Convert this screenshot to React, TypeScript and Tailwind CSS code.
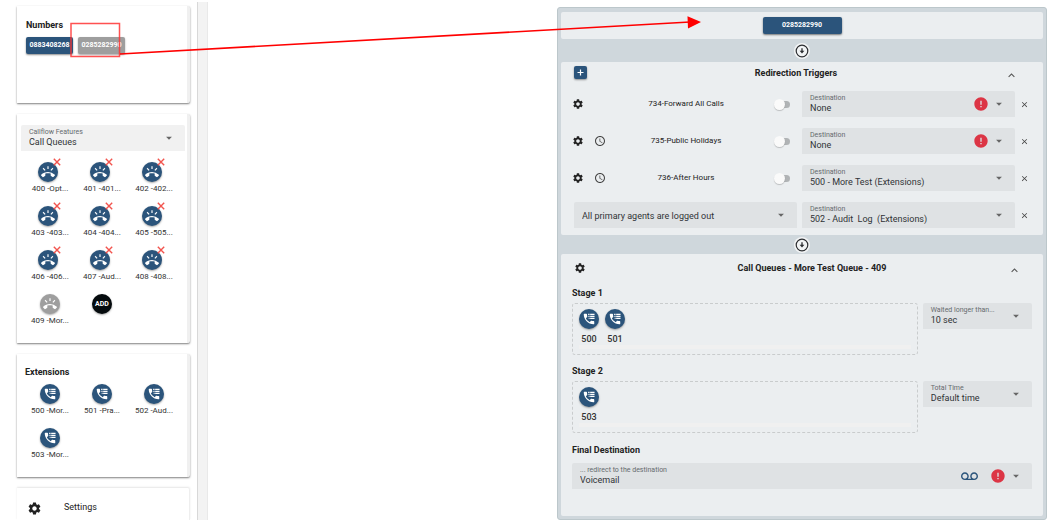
import { useId, type ReactNode } from "react";
import {
  MdAccessTime,
  MdArrowDropDown,
  MdClose,
  MdError,
  MdExpandLess,
  MdRingVolume,
  MdSettings,
  MdVoicemail,
} from "react-icons/md";

const queues = [
  "400 -Opt...",
  "401 -401...",
  "402 -402...",
  "403 -403...",
  "404 -404...",
  "405 -505...",
  "406 -406...",
  "407 -Aud...",
  "408 -408...",
];
const extensions = ["500 -Mor...", "501 -Pra...", "502 -Aud...", "503 -Mor..."];

const triggers = [
  { name: "734-Forward All Calls", scheduled: false, destination: "None", invalid: true },
  { name: "735-Public Holidays", scheduled: true, destination: "None", invalid: true },
  { name: "736-After Hours", scheduled: true, destination: "500 - More Test (Extensions)", invalid: false },
];

function SelectField({
  label,
  value,
  hideLabel = false,
  tone = "bg-[#dfe2e4]",
  children,
}: {
  label: string;
  value: string;
  hideLabel?: boolean;
  tone?: string;
  children?: ReactNode;
}) {
  const id = useId();
  return (
    <div className={`relative h-[26px] min-w-0 rounded-t-[2px] ${tone}`}>
      {!hideLabel && (
        <label
          htmlFor={id}
          className="pointer-events-none absolute left-2 top-[3px] text-[7px] leading-[8px] text-[#666b6e]"
        >
          {label}
        </label>
      )}
      <select
        id={id}
        aria-label={hideLabel ? label : undefined}
        className={`h-full w-full appearance-none bg-transparent pl-2 pr-6 text-[9px] text-[#303336] outline-none ${
          hideLabel ? "" : "pt-[9px]"
        }`}
      >
        <option>{value}</option>
      </select>
      <div className="pointer-events-none absolute inset-y-0 right-[9px] flex items-center gap-[3px]">
        {children}
        <MdArrowDropDown className="size-[14px] text-[#666]" />
      </div>
    </div>
  );
}

function PhoneLogIcon() {
  return (
    <svg viewBox="0 0 24 24" className="size-[14px]" fill="currentColor" aria-hidden="true">
      <path d="M20 15.500c-1.200 0-2.500-.2-3.600-.6h-.3c-.3 0-.5.1-.7.3l-2.200 2.200c-2.800-1.500-5.200-3.800-6.600-6.600l2.200-2.200c.3-.3.4-.7.2-1-.3-1.100-.5-2.400-.5-3.600 0-.5-.5-1-1-1H4c-.6 0-1 .5-1 1 0 9.400 7.600 17 17 17 .5 0 1-.5 1-1v-3.500c0-.6-.5-1-1-1z" />
      <path d="M10.500 3h2.500v2.200h-2.500zM14 3h7.500v2.200H14zM11 6.400h2v2.200h-2zM14 6.400h7.500v2.200H14zM11.500 9.800H13V12h-1.500zM14 9.800h7.500V12H14z" />
    </svg>
  );
}

function Disc({ children, tone = "bg-[#2b547b]" }: { children: ReactNode; tone?: string }) {
  return (
    <span
      className={`flex size-5 items-center justify-center rounded-full text-white shadow-[0_1px_2px_rgba(0,0,0,0.35)] ${tone}`}
    >
      {children}
    </span>
  );
}

function SideItem({ label, children }: { label: string; children: ReactNode }) {
  return (
    <div className="flex h-11 flex-col items-center">
      {children}
      <span className="text-[8px] leading-[14px] text-[#333]">{label}</span>
    </div>
  );
}

function SideCard({ className, children }: { className: string; children: ReactNode }) {
  return (
    <section
      className={`rounded-r-[2px] border-r-[3px] border-[#f0f0f0] bg-white shadow-[0_1px_2px_rgba(0,0,0,0.5)] ${className}`}
    >
      {children}
    </section>
  );
}

function Connector() {
  return (
    <svg viewBox="0 0 16 16" className="mx-auto block size-4" aria-hidden="true">
      <circle cx="8" cy="8" r="8" fill="#f2f4f5" />
      <circle cx="8" cy="8" r="5.800" fill="none" stroke="#2b2d30" strokeWidth="1.200" />
      <path d="M8 5.200v3.600" stroke="#2b2d30" strokeWidth="1.300" />
      <path d="M5.600 7.800h4.800L8 10.600z" fill="#2b2d30" />
    </svg>
  );
}

function RemoveButton() {
  return (
    <button aria-label="Remove trigger" className="flex items-center justify-start text-[#444]">
      <MdClose className="size-[9px]" />
    </button>
  );
}

function Stage({
  title,
  members,
  timeLabel,
  time,
}: {
  title: string;
  members: string[];
  timeLabel: string;
  time: string;
}) {
  return (
    <div className="h-[78px]">
      <h3 className="h-4 text-[9px] font-bold leading-[12px]">{title}</h3>
      <div className="grid grid-cols-[345fr_109fr] items-start gap-[5px]">
        <div className="h-[52px] rounded-[3px] border border-dashed border-[#c9cccd] px-[6px] pt-[5px]">
          <div className="flex gap-[6px]">
            {members.map((m) => (
              <div key={m} className="flex h-9 w-5 flex-col items-center gap-[5px]">
                <Disc>
                  <PhoneLogIcon />
                </Disc>
                <span className="text-[9px] font-medium leading-[11px] text-[#333]">{m}</span>
              </div>
            ))}
          </div>
          <div className="h-1 bg-[#f0f0f0]" />
        </div>
        <SelectField label={timeLabel} value={time} />
      </div>
    </div>
  );
}

export default function App() {
  return (
    <div className="relative flex min-h-[531px] bg-white pb-[11px] font-[Roboto,sans-serif] text-[#222]">
      <aside className="flex w-[197px] shrink-0 flex-col gap-[11px] overflow-hidden pl-[17px] pr-[7px] pt-[6px]">
        <SideCard className="h-[97px] px-[9px] pt-[13px]">
          <h2 className="text-[9px] font-bold leading-[12px]">Numbers</h2>
          <div className="mt-[6px] flex gap-[5px]">
            <button className="h-[17px] w-[47px] rounded-[2px] bg-[#2b547b] text-[7px] font-bold text-white shadow-[0_1px_2px_rgba(0,0,0,0.45)]">
              0883408268
            </button>
            <button className="h-[17px] w-[47px] rounded-[2px] bg-[#9e9e9e] text-[7px] font-bold text-white shadow-[0_1px_2px_rgba(0,0,0,0.35)]">
              0285282990
            </button>
          </div>
        </SideCard>

        <SideCard className="h-[229px] pt-[11px]">
          <div className="ml-1 mr-[2px]">
            <SelectField label="Callflow Features" value="Call Queues" tone="bg-[#f1f1f1]" />
          </div>
          <div className="mt-[11px] grid grid-cols-3 pl-[7px] pr-[7px]">
            {queues.map((q) => (
              <SideItem key={q} label={q}>
                <div className="relative mr-1">
                  <Disc>
                    <MdRingVolume className="size-[14px]" />
                  </Disc>
                  <button aria-label={`Delete ${q}`} className="absolute -right-[3px] -top-1">
                    <svg viewBox="0 0 8 8" className="block size-2" aria-hidden="true">
                      <path d="M.8.8l6.400 6.400M7.200.8L.8 7.200" stroke="#f2544e" strokeWidth="1.400" />
                    </svg>
                  </button>
                </div>
              </SideItem>
            ))}
            <SideItem label="409 -Mor...">
              <Disc tone="bg-[#9e9e9e]">
                <MdRingVolume className="size-[14px]" />
              </Disc>
            </SideItem>
            <button className="flex size-5 items-center justify-center justify-self-center rounded-full bg-[#050b0e] text-[7px] font-bold text-white shadow-[0_1px_2px_rgba(0,0,0,0.35)]">
              ADD
            </button>
          </div>
        </SideCard>

        <SideCard className="h-[123px] pt-[12px]">
          <h2 className="pl-2 text-[9px] font-bold leading-[12px]">Extensions</h2>
          <div className="mt-[6px] grid grid-cols-3 pl-[7px] pr-[7px]">
            {extensions.map((e) => (
              <SideItem key={e} label={e}>
                <Disc>
                  <PhoneLogIcon />
                </Disc>
              </SideItem>
            ))}
          </div>
        </SideCard>

        <div className="flex h-8 items-center gap-[22px] rounded-tr-[2px] border-r border-[#eee] pl-[10px] pt-2 shadow-[0_-1px_2px_rgba(0,0,0,0.1)]">
          <MdSettings className="size-[15px]" />
          <a href="#settings" className="text-[9px]">
            Settings
          </a>
        </div>
      </aside>

      <div className="mt-[2px] w-[11px] shrink-0 border-l border-r border-l-[#d8d8d8] border-r-[#e9e9e9] bg-[#f3f3f3]" />

      <main className="grid flex-1 grid-cols-[349fr_490fr] items-start pr-[10px] pt-[7px]">
        <section className="col-start-2 rounded-[3px] border border-[#bcc7cb] bg-[#cfd7dc] p-[3px] pt-1">
          <div className="flex justify-center rounded-[2px] bg-[#ebeef0] py-[5px]">
            <button className="h-[17px] w-[79px] rounded-[2px] bg-[#2b547b] text-[7px] font-bold text-white shadow-[0_1px_2px_rgba(0,0,0,0.5)]">
              0285282990
            </button>
          </div>

          <div className="pb-[3px] pt-1">
            <Connector />
          </div>

          <div className="rounded-[2px] bg-[#ebeef0] pb-[7px] pl-[11px] pr-[5px]">
            <div className="flex h-[29px] items-start pr-5 pt-1">
              <button
                aria-label="Add trigger"
                className="ml-[2px] flex size-[13px] items-center justify-center rounded-[2px] bg-[#2b547b] text-white shadow-[0_1px_2px_rgba(0,0,0,0.4)]"
              >
                <svg viewBox="0 0 7 7" className="size-[7px]" aria-hidden="true">
                  <path d="M3.500.5v6M.5 3.500h6" stroke="currentColor" strokeWidth="1.200" />
                </svg>
              </button>
              <h2 className="flex-1 text-center text-[9px] font-bold leading-[14px]">Redirection Triggers</h2>
              <button aria-label="Collapse triggers" className="mt-[3px] text-[#555]">
                <MdExpandLess className="size-[13px]" />
              </button>
            </div>
            <div className="flex flex-col gap-[11px]">
              {triggers.map((t) => (
                <div key={t.name} className="grid grid-cols-[225fr_213fr_18fr] items-center gap-x-[5px]">
                  <div className="flex items-center">
                    <button aria-label={`Configure ${t.name}`}>
                      <MdSettings className="size-3" />
                    </button>
                    <span className="ml-[9px] flex size-[13px] items-center justify-center text-[#444]">
                      {t.scheduled && <MdAccessTime className="size-3" />}
                    </span>
                    <span className="flex-1 pr-2 text-center text-[8px] text-[#222]">{t.name}</span>
                    <input
                      type="checkbox"
                      role="switch"
                      aria-label={t.name}
                      className="relative mr-[7px] h-[7px] w-4 appearance-none before:absolute before:inset-y-0 before:right-0 before:w-[12px] before:rounded-full before:bg-[#b0b3b5] after:absolute after:-top-[2px] after:left-0 after:size-[11px] after:rounded-full after:bg-[#fafafa] after:shadow-[0_1px_1px_rgba(0,0,0,0.2)]"
                    />
                  </div>
                  <SelectField label="Destination" value={t.destination}>
                    {t.invalid && <MdError className="size-4 text-[#dc3545]" />}
                  </SelectField>
                  <RemoveButton />
                </div>
              ))}
              <div className="grid grid-cols-[225fr_213fr_18fr] items-center gap-x-[5px]">
                <div className="pl-[2px]">
                  <SelectField label="Condition" hideLabel value="All primary agents are logged out" />
                </div>
                <SelectField
                  label="Destination"
                  value={"502 - Audit\u00a0 Log\u00a0 (Extensions)"}
                />
                <RemoveButton />
              </div>
            </div>
          </div>

          <div className="pb-px pt-[2px]">
            <Connector />
          </div>

          <div className="rounded-[2px] bg-[#ebeef0] pb-[27px] pl-[11px] pr-[11px]">
            <div className="flex h-[33px] items-start pt-[7px]">
              <button aria-label="Queue settings" className="ml-[2px] mt-px">
                <MdSettings className="size-3" />
              </button>
              <h2 className="flex-1 pl-[30px] text-center text-[9px] font-bold leading-[14px]">
                Call Queues - More Test Queue - 409
              </h2>
              <button aria-label="Collapse queue" className="mr-[11px] mt-[3px] text-[#555]">
                <MdExpandLess className="size-[13px]" />
              </button>
            </div>
            <Stage title="Stage 1" members={["500", "501"]} timeLabel="Waited longer than..." time="10 sec" />
            <Stage title="Stage 2" members={["503"]} timeLabel="Total Time" time="Default time" />
            <h3 className="mb-[7px] mt-px text-[9px] font-bold leading-[12px]">Final Destination</h3>
            <SelectField label="... redirect to the destination" value="Voicemail">
              <MdVoicemail className="mr-[9px] size-[17px] text-[#2b547b]" />
              <MdError className="size-4 text-[#dc3545]" />
            </SelectField>
          </div>
        </section>
      </main>

      <svg
        viewBox="0 0 1057 531"
        preserveAspectRatio="xMinYMin meet"
        className="pointer-events-none absolute left-0 top-0 w-full"
        aria-hidden="true"
      >
        <rect x="71" y="23.500" width="48.500" height="33" fill="none" stroke="#f33" strokeWidth="1.500" strokeOpacity="0.85" />
        <path d="M120 54L690 22" stroke="#f00" strokeWidth="1.600" />
        <path d="M687.500 16.200L701 22L688 28.500Z" fill="#f00" />
      </svg>
    </div>
  );
}
